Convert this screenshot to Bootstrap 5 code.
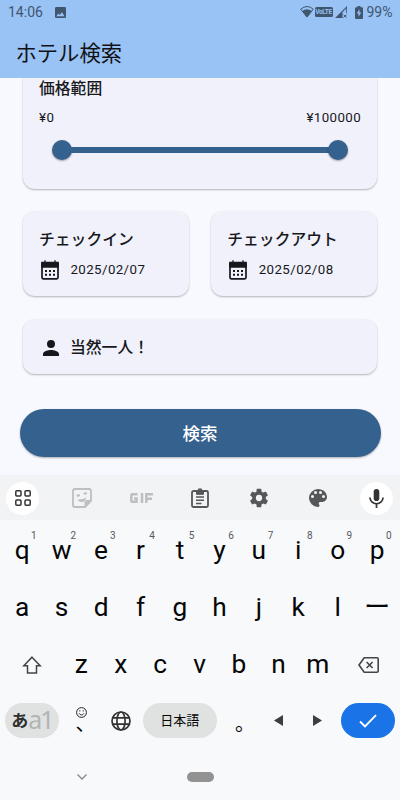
<!DOCTYPE html>
<html lang="ja">
<head>
<meta charset="utf-8">
<meta name="viewport" content="width=device-width, initial-scale=1">
<title>ホテル検索</title>
<link href="https://cdn.jsdelivr.net/npm/bootstrap@5.3.0/dist/css/bootstrap.min.css" rel="stylesheet">
<style>
body{width:400px;height:800px;overflow:hidden;background:#f8f9ff;color:#17181c;font-family:Roboto,"Noto Sans CJK JP",sans-serif}
svg{display:block;flex:none}
.app-head{height:78px;background:#99c2f5}
.status{height:24px;font-size:14px;line-height:24px;color:#40566f;padding:0 7.5px 0 8px}
.photo{margin-left:12px}
.volte{width:18px;height:10px;margin-left:1px;border-radius:1.5px;background:#40566f;color:#99c2f5;font-size:6.5px;line-height:10px;font-weight:700;letter-spacing:-.35px;text-align:center}
.signal{margin-left:2px}
.battery{margin-left:8px}
.percent{margin-left:4px}
.app-title{height:54px;padding:3px 0 0 15.5px;font-size:21.3px;line-height:54px;font-weight:400;color:#101215}
.content{height:397px;padding:0 23px}
.panel{background:#f1f1fb;border:0;border-radius:12px;box-shadow:0 1px 2px rgba(0,0,0,.28);color:#17181c}
.price{height:110.5px;padding-top:1px;border-radius:0 0 12px 12px;clip-path:inset(0 -4px -5px -4px)}
.prices{margin-top:11px}
.label{font-size:15.8px;line-height:20px;font-weight:500}
.num{font-size:13.3px;line-height:16px;letter-spacing:.4px}
.slide{height:20px;margin:13.5px 13.5px 0 13px}
.knob{width:20px;height:20px;background:#35618e;box-shadow:0 1px 2px rgba(0,0,0,.35);flex:none}
.rail{height:6px;background:#35618e;margin:0 -2px}
.dates{margin-top:22.5px;gap:22.5px}
.date{height:85px;padding:19px 16px 0;width:50%}
.day{margin:10px 0 0 1px}
.day .num{margin-left:10.5px}
.guest{height:55px;margin-top:23px;padding:2px 16px 0}
.guest svg{margin-left:3.5px}
.guest .label{margin-left:11.5px}
.search{height:48.5px;margin:34.5px -3.5px 0;background:#35618e;color:#fff;font-size:17.5px;font-weight:500;padding:3px 0 0;box-shadow:0 1px 2px rgba(0,0,0,.3)}
.tools{height:45px;background:#f1f3f4;color:#55585b;padding-top:1px}
.tool{width:59.1px;flex:none;display:flex;justify-content:center}
.tool:first-child{width:52.5px;padding-right:7px}
.tool:last-child{width:52px;padding-left:6px}
.disc{width:33px;height:33px;background:#fff}
.kb{height:280px;background:#f8f9fb;padding:2px 2.5px 0;color:#060606}
.krow{height:57px}
.krow.last{height:55px}
.key{width:39.44px;font-size:26.3px;line-height:57px;text-align:center;position:relative;flex:none}
.key sup{position:absolute;font-size:10px;line-height:12px;top:8px;left:28.5px;color:#55585b}
.wide{width:59px;flex:none}
.back{padding-left:2px}
.pill{height:35px;border-radius:18px;background:#e0e2e1}
.mode{width:53.5px}
.mode b{font-size:17px;line-height:20px;font-weight:700;color:#2e3030;padding-top:1px}
.mode span{font:400 25px/35px "Noto Sans",sans-serif;color:#b2b4b3;letter-spacing:-1.8px;margin-top:-3px}
.gap-key{width:79px;flex:none}
.space{width:73.5px;font-size:13px;padding-top:1px}
.enter{width:54.5px;background:#1b73e8}
.punct{height:55px;text-align:left}
.comma{font-size:20px;line-height:20px;padding:21px 0 0 14px}
.maru{font-size:20px;line-height:20px;padding:21px 0 0 15.5px}
.nav-area{height:58px}
.chev{margin-left:74.5px}
.home{width:27px;height:10px;background:#929292;margin-left:100px}
.emo{position:absolute;left:14px;top:13.5px}
</style>
<script src="https://cdn.jsdelivr.net/npm/bootstrap@5.3.0/dist/js/bootstrap.bundle.min.js"></script>
</head>
<body>
<header class="app-head">
 <div class="status d-flex justify-content-between">
  <div class="d-flex align-items-center"><span>14:06</span>
   <svg class="photo" width="11" height="11" viewBox="0 0 11 11"><rect width="11" height="11" rx="1.2" fill="#40566f"/><path d="M1.4 9.2 3.4 6.600 4.800 8 6.900 5.300 9.600 9.200Z" fill="#99c2f5"/></svg></div>
  <div class="d-flex align-items-center">
   <svg width="14" height="12" viewBox="0 0 14 12"><path d="M.7 3.200Q7-2.200 13.300 3.200L7 11Z" fill="none" stroke="#40566f"/><path d="M2.200 5Q7 1.700 11.800 5L7 11.500Z" fill="#40566f"/></svg>
   <span class="volte">VoLTE</span>
   <svg class="signal" width="12" height="12" viewBox="0 0 12 12"><path d="M0 12 12 0V7H7.500V12Z" fill="#40566f"/><path d="M7 7 11.200 2.300V7Z" fill="#99c2f5"/><path d="m8.500 8.600 3 3m0-3-3 3" stroke="#40566f"/></svg>
   <svg class="battery" width="8" height="13" viewBox="0 0 8 13"><path d="M2.500 0h3v1.300H7q1 0 1 1V12q0 1-1 1H1q-1 0-1-1V2.300q0-1 1-1h1.500Z" fill="#40566f"/><path d="M4.500 3.300 1.700 7.600h1.800v3.200l2.800-4.400H4.500Z" fill="#99c2f5"/></svg>
   <span class="percent">99%</span></div>
 </div>
 <h1 class="app-title m-0">ホテル検索</h1>
</header>

<main class="content">
 <section class="panel price px-3">
  <div class="label">価格範囲</div>
  <div class="num prices d-flex justify-content-between"><span>¥0</span><span>¥100000</span></div>
  <div class="slide d-flex align-items-center"><div class="knob rounded-circle"></div><div class="rail flex-fill"></div><div class="knob rounded-circle"></div></div>
 </section>
 <div class="dates d-flex">
  <section class="panel date"><div class="label">チェックイン</div>
   <div class="day d-flex align-items-center"><svg width="20" height="20" viewBox="0 0 20 20"><rect x="2" y="2.800" width="16" height="16" rx="1.300" fill="none" stroke="#17181c" stroke-width="1.700"/><path d="M1.800 2.500h16.400V7H1.800ZM5 .3v3M15 .3v3" fill="#17181c" stroke="#17181c" stroke-width="1.300"/><path d="M5 11h2m2 0h2m2 0h2M5 14.800h2m2 0h2m2 0h2" stroke="#17181c" stroke-width="1.900"/></svg><span class="num">2025/02/07</span></div></section>
  <section class="panel date"><div class="label">チェックアウト</div>
   <div class="day d-flex align-items-center"><svg width="20" height="20" viewBox="0 0 20 20"><rect x="2" y="2.800" width="16" height="16" rx="1.300" fill="none" stroke="#17181c" stroke-width="1.700"/><path d="M1.800 2.500h16.400V7H1.800ZM5 .3v3M15 .3v3" fill="#17181c" stroke="#17181c" stroke-width="1.300"/><path d="M5 11h2m2 0h2m2 0h2M5 14.800h2m2 0h2m2 0h2" stroke="#17181c" stroke-width="1.900"/></svg><span class="num">2025/02/08</span></div></section>
 </div>
 <section class="panel guest d-flex align-items-center">
  <svg width="16" height="16" viewBox="4 4 16 16" fill="#17181c"><path d="M12 12a4 4 0 1 0 0-8 4 4 0 0 0 0 8Zm0 2c-2.700 0-8 1.300-8 4v2h16v-2c0-2.700-5.300-4-8-4Z"/></svg>
  <span class="label">当然一人！</span>
 </section>
 <div class="d-grid"><button class="search btn rounded-pill" type="button">検索</button></div>
</main>

<div class="tools d-flex align-items-center">
 <div class="tool"><span class="disc rounded-circle d-flex align-items-center justify-content-center"><svg width="16" height="16" viewBox="0 0 16 16" fill="none" stroke="#333" stroke-width="1.500"><rect x=".8" y=".8" width="5.200" height="5.200" rx="1"/><rect x="10" y=".8" width="5.200" height="5.200" rx="1"/><rect x=".8" y="10" width="5.200" height="5.200" rx="1"/><rect x="10" y="10" width="5.200" height="5.200" rx="1"/></svg></span></div>
 <div class="tool"><svg width="20" height="20" viewBox="0 0 20 20" fill="none" stroke="#bdbfc1" stroke-width="1.800"><path d="M3 1h14q2 0 2 2v10l-6 6H3q-2 0-2-2V3q0-2 2-2Z"/><path d="M19 12.500h-4q-2 0-2 2V19l6-6Z" fill="#bdbfc1" stroke-width="1"/><path d="M4.800 8 7.800 7m4-1.200 3-.8" stroke-width="2.200"/><path d="M5.500 11.500q5 .6 8.800-2-.8 4.500-4.800 4.500-2.500 0-4-2.500Z" fill="#bdbfc1" stroke="none"/></svg></div>
 <div class="tool"><svg width="24" height="12" viewBox="0 0 24 12" fill="none" stroke="#bdbfc1" stroke-width="2.500"><path d="M8.500 2.250H3.300q-1 0-1 1v5.500q0 1 1 1h4.200V6.500H5M13 1v10M17.300 11V2.250H24M17.300 6.700H23"/></svg></div>
 <div class="tool"><svg width="18" height="20" viewBox="0 0 18 20" fill="none" stroke="#55585b" stroke-width="1.800"><rect x="1" y="3" width="16" height="16" rx="1.500"/><path d="M5.500 3.500h7v2.800h-7Z" fill="#55585b" stroke-width="1"/><circle cx="9" cy="2.600" r="1.700" stroke-width="1.500"/><path d="M5 9h8M5 12.200h8M5 15.400h5.500" stroke-width="1.500"/></svg></div>
 <div class="tool"><svg width="20" height="20" viewBox="1.500 1.500 21 21" fill="#55585b"><path d="M19.140 12.940c.040-.3.060-.610.060-.940 0-.320-.020-.640-.070-.940l2.030-1.580a.49.49 0 0 0 .120-.610l-1.920-3.320a.488.488 0 0 0-.590-.220l-2.390.960c-.5-.380-1.030-.7-1.620-.940l-.360-2.540a.484.484 0 0 0-.480-.410h-3.840c-.240 0-.430.170-.470.410l-.360 2.540c-.590.240-1.130.570-1.620.940l-2.390-.960c-.220-.080-.470 0-.590.220L2.740 8.870c-.120.210-.080.470.120.610l2.030 1.580c-.050.3-.090.630-.090.940s.020.640.070.940l-2.030 1.580a.49.49 0 0 0-.120.610l1.920 3.320c.120.220.370.290.590.220l2.390-.960c.5.380 1.030.7 1.620.940l.360 2.540c.050.240.240.410.480.410h3.840c.240 0 .440-.170.470-.410l.360-2.540c.590-.240 1.130-.560 1.620-.940l2.390.960c.220.080.470 0 .590-.220l1.920-3.320c.120-.220.070-.470-.120-.610l-2.010-1.580ZM12 15.300a3.300 3.300 0 1 1 0-6.600 3.300 3.300 0 0 1 0 6.600Z"/></svg></div>
 <div class="tool"><svg width="18" height="18" viewBox="3 3 18 18" fill="#55585b"><path d="M12 3a9 9 0 0 0 0 18c.830 0 1.500-.670 1.500-1.500 0-.390-.150-.740-.390-1.010-.230-.260-.380-.610-.380-.990 0-.830.670-1.500 1.500-1.500H16c2.760 0 5-2.240 5-5 0-4.420-4.030-8-9-8Zm-5.500 9a1.500 1.500 0 1 1 0-3 1.500 1.500 0 0 1 0 3Zm3-4a1.500 1.500 0 1 1 0-3 1.500 1.500 0 0 1 0 3Zm5 0a1.500 1.500 0 1 1 0-3 1.500 1.500 0 0 1 0 3Zm3 4a1.500 1.500 0 1 1 0-3 1.500 1.500 0 0 1 0 3Z"/></svg></div>
 <div class="tool"><span class="disc rounded-circle d-flex align-items-center justify-content-center"><svg width="15" height="19" viewBox="0 0 15 19"><rect x="4.700" y="0" width="5.600" height="12" rx="2.800" fill="#333"/><path d="M1 8.500a6.500 6.300 0 0 0 13 0M7.500 14.800V19" fill="none" stroke="#333" stroke-width="1.700"/></svg></span></div>
</div>

<div class="kb">
 <div class="krow d-flex"><div class="key">q<sup>1</sup></div><div class="key">w<sup>2</sup></div><div class="key">e<sup>3</sup></div><div class="key">r<sup>4</sup></div><div class="key">t<sup>5</sup></div><div class="key">y<sup>6</sup></div><div class="key">u<sup>7</sup></div><div class="key">i<sup>8</sup></div><div class="key">o<sup>9</sup></div><div class="key">p<sup>0</sup></div></div>
 <div class="krow d-flex"><div class="key">a</div><div class="key">s</div><div class="key">d</div><div class="key">f</div><div class="key">g</div><div class="key">h</div><div class="key">j</div><div class="key">k</div><div class="key">l</div><div class="key">ー</div></div>
 <div class="krow d-flex align-items-center">
  <div class="wide d-flex justify-content-center"><svg width="20" height="18" viewBox="0 0 20 18" fill="none" stroke="#444" stroke-width="1.500"><path d="M10 1.200 18.200 9.800H14.500V17h-9V9.800H1.800Z"/></svg></div>
  <div class="key">z</div><div class="key">x</div><div class="key">c</div><div class="key">v</div><div class="key">b</div><div class="key">n</div><div class="key">m</div>
  <div class="wide back d-flex justify-content-center"><svg width="21" height="16" viewBox="0 0 21 16" fill="none" stroke="#444" stroke-width="1.600"><path d="M6.200.8H19q1.200 0 1.200 1.200v12q0 1.200-1.200 1.200H6.200L1 8Z"/><path d="m8.600 5 6 6m0-6-6 6"/></svg></div>
 </div>
 <div class="krow last d-flex align-items-center">
  <div class="wide d-flex justify-content-center"><div class="pill mode d-flex align-items-center justify-content-center"><b>あ</b><span>a1</span></div></div>
  <div class="key punct comma"><svg class="emo" width="11" height="11" viewBox="0 0 11 11" fill="none" stroke="#222"><circle cx="5.500" cy="5.500" r="4.900"/><path d="M3 6.300q2.500 3.400 5 0" stroke-width="1"/><path d="M3.200 3.900h1.200m2.200 0h1.200"/></svg>、</div>
  <div class="key d-flex justify-content-center"><svg width="20" height="20" viewBox="0 0 20 20" fill="none" stroke="#333" stroke-width="1.700"><circle cx="10" cy="10" r="9"/><ellipse cx="10" cy="10" rx="4.100" ry="9"/><path d="M1.500 6.900h17M1.500 13.100h17"/></svg></div>
  <div class="gap-key d-flex justify-content-center"><div class="pill space d-flex align-items-center justify-content-center">日本語</div></div>
  <div class="key punct maru">。</div>
  <div class="key d-flex justify-content-center"><svg width="9" height="11" viewBox="0 0 9 11"><path d="M9 0v11L0 5.500Z" fill="#3c3e40"/></svg></div>
  <div class="key d-flex justify-content-center"><svg width="9" height="11" viewBox="0 0 9 11"><path d="M0 0v11l9-5.500Z" fill="#3c3e40"/></svg></div>
  <div class="wide back d-flex justify-content-center"><div class="pill enter d-flex align-items-center justify-content-center"><svg width="18" height="14" viewBox="0 0 18 14" fill="none" stroke="#fff" stroke-width="1.900"><path d="m1 7.500 5 5L17 1.200"/></svg></div></div>
 </div>
 <div class="nav-area d-flex align-items-center">
  <svg class="chev" width="10" height="6" viewBox="0 0 10 6" fill="none" stroke="#888" stroke-width="1.300"><path d="m.5.5 4.500 4.500L9.500.5"/></svg>
  <div class="home rounded-pill"></div>
 </div>
</div>
</body>
</html>
